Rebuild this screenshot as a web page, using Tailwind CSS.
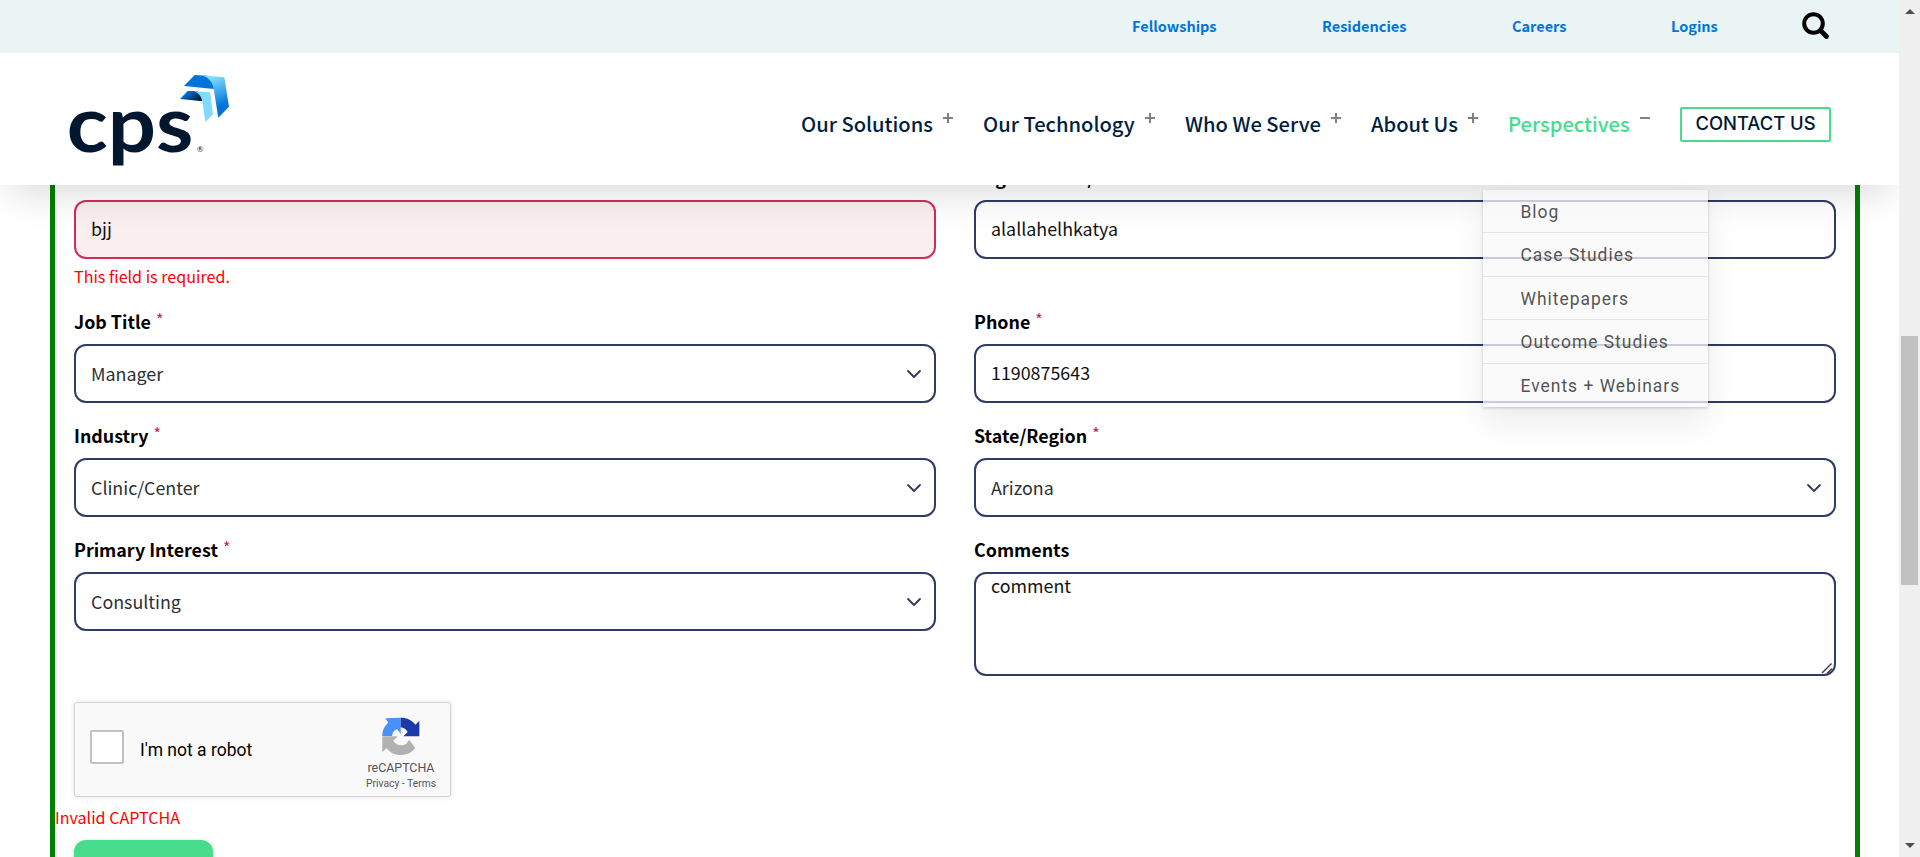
<!DOCTYPE html>
<html lang="en">
<head>
<meta charset="utf-8">
<title>CPS Contact</title>
<script src="https://cdn.jsdelivr.net/npm/@tailwindcss/browser@4"></script>
</head>
<body class="h-[857px] w-[1920px] overflow-hidden bg-white font-['Noto_Sans_CJK_SC',sans-serif]">
<div class="flex h-[857px]">
  <div class="relative flex h-full w-[1899px] flex-col overflow-hidden">

    <header class="relative z-10 h-[185px] shrink-0 bg-white shadow-[0_18px_36px_-10px_rgba(0,0,0,0.15)]">
      <div class="flex h-[53px] items-center bg-[#ebf4f4] pl-[1132px] text-[14.5px] leading-[24px] font-bold text-[#0074d9]">
        <a class="w-[190px] pb-[2px]">Fellowships</a>
        <a class="w-[190px] pb-[2px]">Residencies</a>
        <a class="w-[159px] pb-[2px]">Careers</a>
        <a class="w-[131px] pb-[2px]">Logins</a>
        <svg class="-mt-px size-[28px]" viewBox="0 0 28 28" fill="none" stroke="#000" stroke-width="4"><circle cx="11.5" cy="11.5" r="9.3"/><path d="M18.5 18.5 24.5 24.5" stroke-width="4.8" stroke-linecap="round"/></svg>
      </div>
      <div class="flex h-[132px]">
        <div class="w-[801px] pt-[19px] pl-[68px]">
          <svg class="h-[100px] w-[164px] overflow-visible" viewBox="84 66 492 300">
            <defs>
              <linearGradient id="g1" x1="0" y1="0" x2="0.25" y2="1"><stop offset="0.15" stop-color="#7fdbff"/><stop offset="0.85" stop-color="#0074d9"/></linearGradient>
              <linearGradient id="g2" x1="0" y1="0" x2="1" y2="0.5"><stop offset="0.3" stop-color="#0074d9"/><stop offset="1" stop-color="#001f3f"/></linearGradient>
            </defs>
            <path fill="#0074d9" d="M432 108 464 75 502 77C515 88 521 102 522 117Z"/>
            <path fill="url(#g1)" d="M484 76 553 82 567 170 535 203 521 117C518 98 507 82 484 76Z"/>
            <path fill="url(#g2)" d="M420 147 443 123H472C483 132 487 145 488 154Z"/>
            <path fill="#7fdbff" d="M458 123 510 127 519 193 496 216 487 154C484 138 475 127 458 123Z"/>
            <text class="font-['Lato'] font-bold" font-size="238" fill="#00172f" x="80" y="305" textLength="380" lengthAdjust="spacingAndGlyphs">cps</text>
            <text class="font-['Lato']" font-size="23" fill="#00172f" x="471" y="306">®</text>
          </svg>
        </div>
        <nav class="flex pt-[59px] text-[20.15px] leading-[24px] font-medium whitespace-nowrap text-[#001f3f]">
          <a class="flex w-[182px]">Our Solutions<i class="mt-[5px] ml-[10px] block h-[2px] w-[10px] bg-[#808080] before:mx-auto before:block before:h-[10px] before:w-[2px] before:-translate-y-[4px] before:bg-[#808080]"></i></a>
          <a class="flex w-[202px]">Our Technology<i class="mt-[5px] ml-[10px] block h-[2px] w-[10px] bg-[#808080] before:mx-auto before:block before:h-[10px] before:w-[2px] before:-translate-y-[4px] before:bg-[#808080]"></i></a>
          <a class="flex w-[186px]">Who We Serve<i class="mt-[5px] ml-[10px] block h-[2px] w-[10px] bg-[#808080] before:mx-auto before:block before:h-[10px] before:w-[2px] before:-translate-y-[4px] before:bg-[#808080]"></i></a>
          <a class="flex w-[137px]">About Us<i class="mt-[5px] ml-[10px] block h-[2px] w-[10px] bg-[#808080] before:mx-auto before:block before:h-[10px] before:w-[2px] before:-translate-y-[4px] before:bg-[#808080]"></i></a>
          <a class="flex w-[172px] text-[#46dc8c]">Perspectives<i class="mt-[5px] ml-[10px] block h-[2px] w-[10px] bg-[#808080]"></i></a>
        </nav>
        <a class="mt-[54px] h-[35px] w-[151px] rounded-[2px] border-2 border-[#46dc8c] text-center font-['Inter'] text-[18.4px] leading-[29px] font-medium text-[#00172f]">CONTACT US</a>
      </div>

      <div class="absolute top-[190px] left-[1483px] w-[225px] bg-[#f9f9f9]/76 pb-px font-['Roboto'] text-[17.45px] leading-[40.4px] tracking-[1px] text-[#333]/85 shadow-[0_1px_3px_rgba(0,0,0,0.2),0_16px_32px_rgba(0,0,0,0.08)]">
        <a class="block border-b border-[#e4e4e4] pt-[2px] pl-[37.5px]">Blog</a>
        <a class="block border-b border-[#e4e4e4] pt-[2px] pl-[37.5px]">Case Studies</a>
        <a class="block border-b border-[#e4e4e4] pt-[2px] pl-[37.5px]">Whitepapers</a>
        <a class="block border-b border-[#e4e4e4] pt-[2px] pl-[37.5px]">Outcome Studies</a>
        <a class="block pt-[2px] pl-[37.5px]">Events + Webinars</a>
      </div>
    </header>

    <form class="-mt-[20px] ml-[50px] h-[692px] w-[1810px] shrink-0 border-x-[5px] border-[#008000] text-[17.85px] leading-[24px] text-black">
      <div class="grid grid-cols-[862px_862px] gap-x-[38px] gap-y-[20px] pl-[19px]">
        <div>
          <label class="mb-[11px] block h-[24px] font-bold">Last Name <span class="font-normal text-[#c8234f]">*</span></label>
          <input class="block h-[59px] w-full rounded-[12px] border-2 border-[#d22d5a] bg-[#faeeee] px-[15px] pb-[3px] text-[#111]" value="bjj">
          <p class="mt-[5px] mb-[1px] h-[24px] text-[16.1px] text-[#ff0000]">This field is required.</p>
        </div>
        <div>
          <label class="mb-[11px] block h-[24px] font-bold">Organization/Institute Name</label>
          <input class="block h-[59px] w-full rounded-[12px] border-2 border-[#2e3c66] px-[15px] pb-[3px] text-[#111]" value="alallahelhkatya">
        </div>
        <div>
          <label class="mb-[11px] block h-[24px] font-bold">Job Title <sup class="top-[-3px] ml-px text-[16px] leading-none font-normal text-[#c8234f]">*</sup></label>
          <div class="flex h-[59px] items-center justify-between rounded-[12px] border-2 border-[#2e3c66] pr-[12.5px] pb-[2px] pl-[15px] text-[#2b3035]">Manager<svg class="mt-[2px] size-4" viewBox="0 0 16 16" fill="none" stroke="#343a56" stroke-width="1.8" stroke-linecap="round" stroke-linejoin="round"><path d="m2 5 6 6 6-6"/></svg></div>
        </div>
        <div>
          <label class="mb-[11px] block h-[24px] font-bold">Phone <sup class="top-[-3px] ml-px text-[16px] leading-none font-normal text-[#c8234f]">*</sup></label>
          <input class="block h-[59px] w-full rounded-[12px] border-2 border-[#2e3c66] px-[15px] pb-[3px] text-[#111]" value="1190875643">
        </div>
        <div>
          <label class="mb-[11px] block h-[24px] font-bold">Industry <sup class="top-[-3px] ml-px text-[16px] leading-none font-normal text-[#c8234f]">*</sup></label>
          <div class="flex h-[59px] items-center justify-between rounded-[12px] border-2 border-[#2e3c66] pr-[12.5px] pb-[2px] pl-[15px] text-[#2b3035]">Clinic/Center<svg class="mt-[2px] size-4" viewBox="0 0 16 16" fill="none" stroke="#343a56" stroke-width="1.8" stroke-linecap="round" stroke-linejoin="round"><path d="m2 5 6 6 6-6"/></svg></div>
        </div>
        <div>
          <label class="mb-[11px] block h-[24px] font-bold">State/Region <sup class="top-[-3px] ml-px text-[16px] leading-none font-normal text-[#c8234f]">*</sup></label>
          <div class="flex h-[59px] items-center justify-between rounded-[12px] border-2 border-[#2e3c66] pr-[12.5px] pb-[2px] pl-[15px] text-[#2b3035]">Arizona<svg class="mt-[2px] size-4" viewBox="0 0 16 16" fill="none" stroke="#343a56" stroke-width="1.8" stroke-linecap="round" stroke-linejoin="round"><path d="m2 5 6 6 6-6"/></svg></div>
        </div>
        <div>
          <label class="mb-[11px] block h-[24px] font-bold">Primary Interest <sup class="top-[-3px] ml-px text-[16px] leading-none font-normal text-[#c8234f]">*</sup></label>
          <div class="flex h-[59px] items-center justify-between rounded-[12px] border-2 border-[#2e3c66] pr-[12.5px] pb-[2px] pl-[15px] text-[#2b3035]">Consulting<svg class="mt-[2px] size-4" viewBox="0 0 16 16" fill="none" stroke="#343a56" stroke-width="1.8" stroke-linecap="round" stroke-linejoin="round"><path d="m2 5 6 6 6-6"/></svg></div>
        </div>
        <div class="relative">
          <label class="mb-[11px] block h-[24px] font-bold">Comments</label>
          <textarea class="block h-[104px] w-full resize-none rounded-[12px] border-2 border-[#2e3c66] px-[15px] leading-[22px] text-[#111]">comment</textarea>
          <svg class="absolute right-[3px] bottom-[2px] h-[12px] w-[12px]" viewBox="0 0 12 12" stroke="#444" stroke-width="1.5"><path d="M1 11 10.5 1.5M6 11.5 11 6.5"/></svg>
        </div>
      </div>

      <div class="mt-[26px] ml-[19px] flex h-[95px] w-[377px] items-center rounded-[3px] border border-[#d3d3d3] bg-[#f9f9f9] pl-[15px] font-['Roboto'] shadow-[0_0_4px_1px_rgba(0,0,0,0.08)]">
        <span class="-mt-[5px] size-[34px] rounded-[2px] border-2 border-[#c1c1c1] bg-white"></span>
        <span class="ml-[16px] flex-1 text-[17.5px]">I'm not a robot</span>
        <div class="flex h-full w-[98px] flex-col items-center pt-[14px] text-[#555]">
          <svg class="h-[38px] w-[38px]" viewBox="1027 110 114 114">
            <path fill="#4a90f9" d="M1028 167C1028 150 1035 135 1046 127L1037 114 1083 112V160L1072 146C1063 150 1058 158 1057 167Z"/>
            <path fill="#1c3aa9" d="M1083 112C1103 112 1118 120 1127 133L1139 122V168H1091L1104 155C1098 145 1091 142 1083 141Z"/>
            <path fill="#b1b1b1" d="M1028 168H1074L1061 181C1068 192 1080 197 1092 194 1100 192 1106 184 1108 178L1127 203C1115 218 1100 224 1083 224 1065 224 1050 217 1041 203L1028 216Z"/>
          </svg>
          <span class="mt-[5px] text-[12.4px] leading-[15px]">reCAPTCHA</span>
          <span class="mt-[3px] text-[10.3px] leading-[12px]">Privacy - Terms</span>
        </div>
      </div>
      <p class="mt-[8px] h-[24px] text-[16.1px] text-[#ff0000]">Invalid CAPTCHA</p>
      <div class="mt-[11px] ml-[19px] h-[50px] w-[139px] rounded-[12px] bg-[#46dc8c] shadow-[0_1px_4px_rgba(0,0,0,0.2)]"></div>
    </form>
  </div>

  <div class="flex h-full w-[21px] flex-col items-center justify-between bg-[#f0f0f0] py-[9px]">
    <svg class="h-[5px] w-[10px]" viewBox="0 0 10 5"><path d="M0 5 5 0 10 5Z" fill="#505050"/></svg>
    <div class="mt-[322px] mb-auto h-[249px] w-[17px] bg-[#c1c1c1]"></div>
    <svg class="h-[5px] w-[10px]" viewBox="0 0 10 5"><path d="M0 0 5 5 10 0Z" fill="#505050"/></svg>
  </div>
</div>
</body>
</html>
